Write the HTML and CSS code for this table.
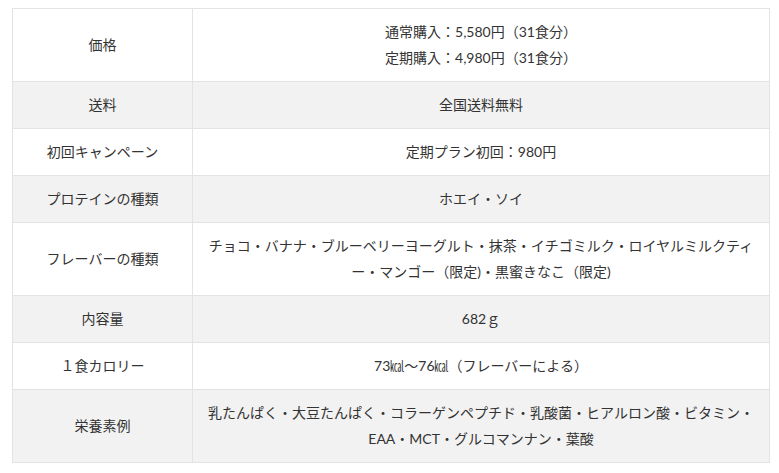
FILE: index.html
```html
<!DOCTYPE html>
<html lang="ja">
<head>
<meta charset="utf-8">
<link rel="stylesheet" href="styles.css">
</head>
<body>
<div class="wrap">
<table class="spec">
<colgroup><col class="c-head"><col class="c-body"></colgroup>
<tbody>
<tr><td>価格</td><td>通常購入：5,580円（31食分）<br>定期購入：4,980円（31食分）</td></tr>
<tr><td>送料</td><td>全国送料無料</td></tr>
<tr><td>初回キャンペーン</td><td>定期プラン初回：980円</td></tr>
<tr><td>プロテインの種類</td><td>ホエイ・ソイ</td></tr>
<tr><td>フレーバーの種類</td><td>チョコ・バナナ・ブルーベリーヨーグルト・抹茶・イチゴミルク・ロイヤルミルクティー・マンゴー（限定)・黒蜜きなこ（限定)</td></tr>
<tr><td>内容量</td><td>682ｇ</td></tr>
<tr><td>１食カロリー</td><td>73㎉～76㎉（フレーバーによる）</td></tr>
<tr><td>栄養素例</td><td>乳たんぱく・大豆たんぱく・コラーゲンペプチド・乳酸菌・ヒアルロン酸・ビタミン・EAA・MCT・グルコマンナン・葉酸</td></tr>
</tbody>
</table>
</div>
</body>
</html>
```

FILE: styles.css
```css
html, body {
  margin: 0;
  padding: 0;
  background: #fff;
}
.wrap {
  padding: 8px 9px 0 12px;
}
.spec {
  width: 758px;
  border-collapse: collapse;
  table-layout: fixed;
  font-family: Lato, "Noto Sans CJK JP", sans-serif;
  font-size: 14px;
  line-height: 26px;
  color: #333;
}
.c-head { width: 180px; }
.spec td {
  border: 1px solid #e3e3e3;
  padding: 10px;
  text-align: center;
  vertical-align: middle;
}
.spec tr:nth-child(even) td {
  background: #f2f2f2;
}
```
